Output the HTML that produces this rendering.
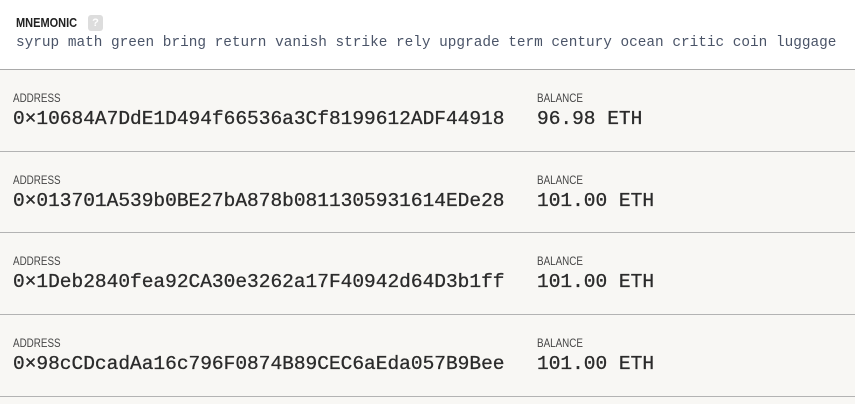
<!DOCTYPE html>
<html><head><style>
body{margin:0;width:855px;height:404px;overflow:hidden;background:#f8f7f4;font-family:"Liberation Sans",sans-serif}
.top{background:#fff;height:69px;border-bottom:1px solid #a9a9a9;position:relative}
.mt{position:absolute;left:16px;top:16px;font-size:12.5px;font-weight:bold;color:#222;transform:scaleX(0.88);transform-origin:left}
.q{position:absolute;left:88px;top:15px;width:15px;height:16px;background:#ddd;border-radius:3px;color:#fff;font-size:11px;font-weight:bold;text-align:center;line-height:16px}
.mn{position:absolute;left:16px;top:35px;font-family:"Liberation Mono",monospace;font-size:14.4px;color:#4a5468;white-space:nowrap}
.row{height:80.7px;border-bottom:1px solid #b3b3b3;position:relative}
.lab{position:absolute;top:21px;font-size:12px;color:#444;transform:scaleX(0.82);transform-origin:left}
.val{position:absolute;top:38px;font-family:"Liberation Mono",monospace;font-size:19.5px;color:#2b2b2b;white-space:nowrap;-webkit-text-stroke:0.3px #2b2b2b}
</style></head><body>
<div class="top"><div class="mt">MNEMONIC</div><div class="q">?</div>
<div class="mn">syrup math green bring return vanish strike rely upgrade term century ocean critic coin luggage</div></div>
<div class="row"><div class="lab" style="left:13px">ADDRESS</div><div class="val" style="left:13px">0×10684A7DdE1D494f66536a3Cf8199612ADF44918</div><div class="lab" style="left:537px">BALANCE</div><div class="val" style="left:537px">96.98 ETH</div></div>
<div class="row"><div class="lab" style="left:13px">ADDRESS</div><div class="val" style="left:13px">0×013701A539b0BE27bA878b0811305931614EDe28</div><div class="lab" style="left:537px">BALANCE</div><div class="val" style="left:537px">101.00 ETH</div></div>
<div class="row"><div class="lab" style="left:13px">ADDRESS</div><div class="val" style="left:13px">0×1Deb2840fea92CA30e3262a17F40942d64D3b1ff</div><div class="lab" style="left:537px">BALANCE</div><div class="val" style="left:537px">101.00 ETH</div></div>
<div class="row"><div class="lab" style="left:13px">ADDRESS</div><div class="val" style="left:13px">0×98cCDcadAa16c796F0874B89CEC6aEda057B9Bee</div><div class="lab" style="left:537px">BALANCE</div><div class="val" style="left:537px">101.00 ETH</div></div>
</body></html>
